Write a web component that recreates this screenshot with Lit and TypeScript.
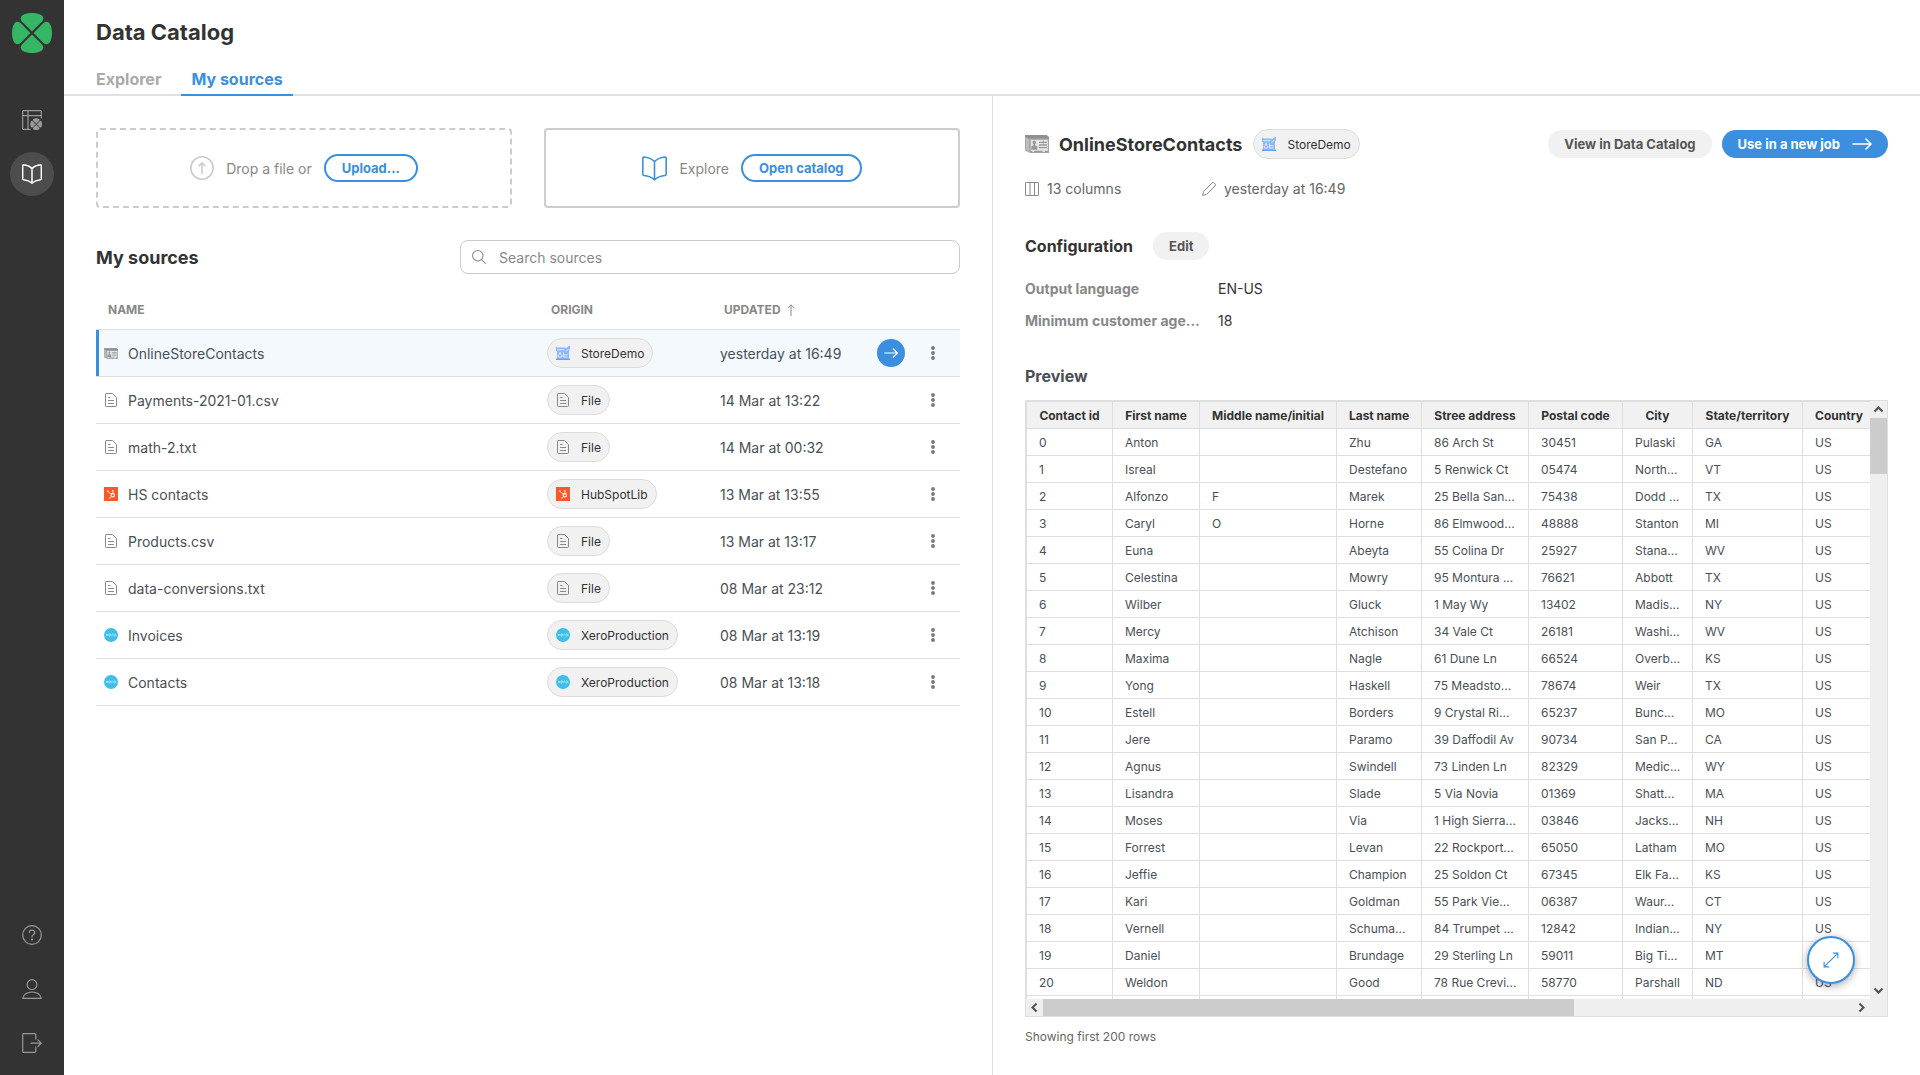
import { LitElement, html, css, svg, nothing } from "lit";
import { customElement, property, state } from "lit/decorators.js";
import { classMap } from "lit/directives/class-map.js";

type SourceKind = "contacts" | "file" | "hubspot" | "xero" | "store";

interface Source {
  name: string;
  icon: SourceKind;
  origin: string;
  originIcon: SourceKind;
  updated: string;
}

const SOURCES: Source[] = [
  { name: "OnlineStoreContacts", icon: "contacts", origin: "StoreDemo", originIcon: "store", updated: "yesterday at 16:49" },
  { name: "Payments-2021-01.csv", icon: "file", origin: "File", originIcon: "file", updated: "14 Mar at 13:22" },
  { name: "math-2.txt", icon: "file", origin: "File", originIcon: "file", updated: "14 Mar at 00:32" },
  { name: "HS contacts", icon: "hubspot", origin: "HubSpotLib", originIcon: "hubspot", updated: "13 Mar at 13:55" },
  { name: "Products.csv", icon: "file", origin: "File", originIcon: "file", updated: "13 Mar at 13:17" },
  { name: "data-conversions.txt", icon: "file", origin: "File", originIcon: "file", updated: "08 Mar at 23:12" },
  { name: "Invoices", icon: "xero", origin: "XeroProduction", originIcon: "xero", updated: "08 Mar at 13:19" },
  { name: "Contacts", icon: "xero", origin: "XeroProduction", originIcon: "xero", updated: "08 Mar at 13:18" },
];

const COLUMNS = [
  { label: "Contact id", width: 86 },
  { label: "First name", width: 87 },
  { label: "Middle name/initial", width: 137 },
  { label: "Last name", width: 85 },
  { label: "Stree address", width: 107 },
  { label: "Postal code", width: 94 },
  { label: "City", width: 70 },
  { label: "State/territory", width: 110 },
  { label: "Country", width: 73 },
];

const GRID_WIDTH = COLUMNS.reduce((sum, c) => sum + c.width, 1);

const ROWS: string[][] = [
  ["0", "Anton", "", "Zhu", "86 Arch St", "30451", "Pulaski", "GA", "US"],
  ["1", "Isreal", "", "Destefano", "5 Renwick Ct", "05474", "North...", "VT", "US"],
  ["2", "Alfonzo", "F", "Marek", "25 Bella San...", "75438", "Dodd ...", "TX", "US"],
  ["3", "Caryl", "O", "Horne", "86 Elmwood...", "48888", "Stanton", "MI", "US"],
  ["4", "Euna", "", "Abeyta", "55 Colina Dr", "25927", "Stana...", "WV", "US"],
  ["5", "Celestina", "", "Mowry", "95 Montura ...", "76621", "Abbott", "TX", "US"],
  ["6", "Wilber", "", "Gluck", "1 May Wy", "13402", "Madis...", "NY", "US"],
  ["7", "Mercy", "", "Atchison", "34 Vale Ct", "26181", "Washi...", "WV", "US"],
  ["8", "Maxima", "", "Nagle", "61 Dune Ln", "66524", "Overb...", "KS", "US"],
  ["9", "Yong", "", "Haskell", "75 Meadsto...", "78674", "Weir", "TX", "US"],
  ["10", "Estell", "", "Borders", "9 Crystal Ri...", "65237", "Bunc...", "MO", "US"],
  ["11", "Jere", "", "Paramo", "39 Daffodil Av", "90734", "San P...", "CA", "US"],
  ["12", "Agnus", "", "Swindell", "73 Linden Ln", "82329", "Medic...", "WY", "US"],
  ["13", "Lisandra", "", "Slade", "5 Via Novia", "01369", "Shatt...", "MA", "US"],
  ["14", "Moses", "", "Via", "1 High Sierra...", "03846", "Jacks...", "NH", "US"],
  ["15", "Forrest", "", "Levan", "22 Rockport...", "65050", "Latham", "MO", "US"],
  ["16", "Jeffie", "", "Champion", "25 Soldon Ct", "67345", "Elk Fa...", "KS", "US"],
  ["17", "Kari", "", "Goldman", "55 Park Vie...", "06387", "Waur...", "CT", "US"],
  ["18", "Vernell", "", "Schuma...", "84 Trumpet ...", "12842", "Indian...", "NY", "US"],
  ["19", "Daniel", "", "Brundage", "29 Sterling Ln", "59011", "Big Ti...", "MT", "US"],
  ["20", "Weldon", "", "Good", "78 Rue Crevi...", "58770", "Parshall", "ND", "US"],
  ["", "", "", "", "", "", "", "", ""],
];

const petal = "M20 18.4 9.9 8.6C7.4 5.2 9 2.6 12.4 1.3 17-.4 23-.4 27.6 1.3 31 2.6 32.6 5.2 30.1 8.6Z";
const petals = [0, 90, 180, 270].map((a) => svg`<path d=${petal} transform="rotate(${a} 20 20)" />`);

const logo = html`<svg width="40" height="40" viewBox="0 0 40 40" fill="#36b665" aria-hidden="true">${petals}</svg>`;

const jobsIcon = html`<svg width="20" height="20" viewBox="0 0 20 20" fill="none" stroke="currentColor" stroke-width="1.2" aria-hidden="true">
  <path d="M8.6 19.3H1.8A1.1 1.1 0 0 1 .7 18.2V1.8A1.1 1.1 0 0 1 1.8.7h16.4a1.1 1.1 0 0 1 1.1 1.1v6.6M.7 5.6h18.6M6 .7v18.6" />
  <g fill="currentColor" stroke="none" transform="translate(8.3 8.3) scale(.295)">${petals}</g>
</svg>`;

const bookIcon = (size: number, stroke: number) => html`<svg width=${size} height=${size} viewBox="0 0 24 24" fill="none" stroke="currentColor" stroke-width=${stroke} stroke-linejoin="round" stroke-linecap="round" aria-hidden="true">
  <path d="M12 5.4C9.6 3 6 1.3 1.8 1A1 1 0 0 0 .8 2v15.6a1.2 1.2 0 0 0 1.1 1.2c4 .4 7.4 1.7 10.1 4.2 2.7-2.5 6.1-3.8 10.1-4.2a1.2 1.2 0 0 0 1.1-1.2V2a1 1 0 0 0-1-1C18 1.3 14.4 3 12 5.4ZM12 5.4V23" />
</svg>`;

const helpIcon = html`<svg width="20" height="20" viewBox="0 0 20 20" fill="none" stroke="currentColor" stroke-width="1.2" stroke-linecap="round" aria-hidden="true">
  <circle cx="10" cy="10" r="9.3" />
  <path d="M7.3 7.6a2.7 2.5 0 1 1 4 2.2c-.9.5-1.3.9-1.3 2" />
  <circle cx="10" cy="14.6" r=".5" fill="currentColor" />
</svg>`;

const userIcon = html`<svg width="20" height="20" viewBox="0 0 20 20" fill="none" stroke="currentColor" stroke-width="1.2" stroke-linejoin="round" aria-hidden="true">
  <circle cx="10" cy="5.6" r="4.9" />
  <path d="M.8 19.3c.5-3.7 4.4-6.3 9.2-6.3s8.7 2.6 9.2 6.3Z" />
</svg>`;

const exitIcon = html`<svg width="20" height="20" viewBox="0 0 20 20" fill="none" stroke="currentColor" stroke-width="1.2" stroke-linejoin="round" stroke-linecap="round" aria-hidden="true">
  <path d="M13.8 6V1.7a1 1 0 0 0-1-1H1.7a1 1 0 0 0-1 1v16.6a1 1 0 0 0 1 1h11.100a1 1 0 0 0 1-1V14.2M9 10.2h10.2M15.9 6.9l3.3 3.3-3.3 3.3" />
</svg>`;

const uploadIcon = html`<svg width="24" height="24" viewBox="0 0 24 24" fill="none" stroke="#ccc" stroke-width="1.6" aria-hidden="true">
  <circle cx="12" cy="12" r="11.2" />
  <path d="M12 18V7M8.6 10.2 12 6.8l3.4 3.4" />
</svg>`;

const searchIcon = html`<svg width="14" height="14" viewBox="0 0 15 15" fill="none" stroke="#888" stroke-width="1.1" stroke-linecap="round" aria-hidden="true">
  <circle cx="6.2" cy="6.2" r="5.6" /><path d="m10.3 10.3 4.1 4.1" />
</svg>`;

const sortIcon = html`<svg width="8" height="12" viewBox="0 0 8 12" fill="none" stroke="currentColor" stroke-width="1" aria-hidden="true">
  <path d="M4 12V.8M.8 4 4 .8 7.2 4" />
</svg>`;

const arrowIcon = html`<svg width="20" height="12" viewBox="0 0 20 12" fill="none" stroke="#fff" stroke-width="1.6" stroke-linecap="round" stroke-linejoin="round" aria-hidden="true">
  <path d="M1 6H19M14 1 19 6 14 11" />
</svg>`;

const smallArrowIcon = html`<svg width="14" height="10" viewBox="0 0 14 10" fill="none" stroke="#fff" stroke-width="1.2" stroke-linecap="round" stroke-linejoin="round" aria-hidden="true">
  <path d="M.7 5h12.600M9.300 1l4 4-4 4" />
</svg>`;

const dotsIcon = html`<svg width="4" height="14" viewBox="0 0 4 14" fill="#777" aria-hidden="true">
  <circle cx="2" cy="2" r="1.9" /><circle cx="2" cy="7" r="1.9" /><circle cx="2" cy="12" r="1.9" />
</svg>`;

const columnsIcon = html`<svg width="14" height="14" viewBox="0 0 14 14" fill="none" stroke="#888" stroke-width="1" aria-hidden="true">
  <rect x=".5" y=".5" width="13" height="13" rx=".6" /><path d="M5 .5v13M9.500.5v13" />
</svg>`;

const pencilIcon = html`<svg width="14" height="14" viewBox="0 0 14 14" fill="none" stroke="#888" stroke-width="1" stroke-linejoin="round" aria-hidden="true">
  <path d="M.6 13.4 1.7 9.3 9.9 1.1a1.7 1.7 0 0 1 2.5 0l.5.5a1.7 1.7 0 0 1 0 2.5L4.7 12.300Z" />
</svg>`;

const expandIcon = html`<svg width="16" height="16" viewBox="0 0 16 16" fill="none" stroke="#3b8fde" stroke-width="1.1" aria-hidden="true">
  <path d="M1.300 14.700 14.700 1.300M9.800 1.100h5.100v5.100M1.100 9.800v5.100h5.100" />
</svg>`;

const chevron = (angle: number) => html`<svg width="17" height="17" viewBox="0 0 17 17" fill="none" stroke="#505050" stroke-width="2" aria-hidden="true">
  <path d="m4.500 10.500 4-4 4 4" transform="rotate(${angle} 8.500 8.500)" />
</svg>`;

const contactsIcon = (w: number, h: number) => html`<svg width=${w} height=${h} viewBox="0 0 24 18" aria-hidden="true">
  <path d="M0 0h21.500L24 2.200V18H5L0 15.500Z" fill="#a6a6a6" />
  <path d="M0 0h21.500L24 2.200V3.600H4.500L0 1.800Z" fill="#8f8f8f" />
  <path d="M1 3 4 4.300v12L1 14.800Z" fill="#bdbdbd" />
  <path d="M5.800 4.800H22.800V16.800H5.800Z" fill="#e6e6e6" />
  <path d="M9.300 5.600a1.700 1.800 0 0 1 1.700 1.800c0 .9-.4 1.500-.9 1.900v.9l2.300 1.300v3.300H6.300v-3.300l2.200-1.300v-.9c-.5-.4-.9-1-.9-1.900a1.700 1.800 0 0 1 1.700-1.800Z" fill="#999" />
  <path d="M14 7.300h8M14 10h8M14 12.700h8" stroke="#999" stroke-width="1.300" />
  <path d="M18.200 5.500v3" stroke="#999" stroke-width="1" />
  <path d="M5.500 16.500h1.500M9 16.500h8.500M20 16.500h3.500" stroke="#999" stroke-width="1.600" />
</svg>`;

const storeIcon = html`<svg width="14" height="14" viewBox="0 0 14 14" aria-hidden="true">
  <path d="M0 1.500h8.500l2 .5L13 0h1v3l-1 1v8.500h1V14H0v-1.500h1V5H0Z" fill="#8ab8fb" />
  <path d="M1 3.700h7.500M2.300 11V9.400l1-1V6.700h1.500v1.700l1 1V11ZM7.500 8.800h4M7.500 6.500v4.600h4.200M10 5.500 12.400 3" fill="none" stroke="#eef5ff" stroke-width=".8" />
  <path d="M0 .8V4M0 13.300h14" stroke="#5e9df8" stroke-width="1" />
</svg>`;

const fileIcon = html`<svg width="14" height="14" viewBox="0 0 14 14" fill="none" stroke="#888" stroke-width="1" stroke-linejoin="round" stroke-linecap="round" aria-hidden="true">
  <path d="M2.300.5h6.200L12.500 4.500v8.200a.8.8 0 0 1-.8.8H2.300a.8.8 0 0 1-.8-.8V1.300a.8.8 0 0 1 .8-.8ZM4.500 4.500h1.500M4.500 7.500h5M4.500 10.500h5" />
</svg>`;

const hubspotIcon = html`<svg width="14" height="14" viewBox="0 0 14 14" fill="none" stroke="#fff" aria-hidden="true">
  <path d="M0 0h14v14H0Z" fill="#f8582b" stroke="none" />
  <circle cx="8.800" cy="8.300" r="1.700" stroke-width="1.100" />
  <path d="M8.900 6.400V3.900M7.400 7.200 4 4.500M7.500 9.600 6 11" stroke-width=".8" />
  <circle cx="8.900" cy="3.700" r=".7" fill="#fff" stroke="none" />
  <circle cx="3.800" cy="4.100" r=".8" fill="#fff" stroke="none" />
  <circle cx="5.800" cy="11.100" r=".6" fill="#fff" stroke="none" />
</svg>`;

const xeroIcon = html`<svg width="14" height="14" viewBox="0 0 14 14" fill="none" stroke="#c3ecf9" stroke-width=".7" aria-hidden="true">
  <circle cx="7" cy="7" r="7" fill="#3fbee8" stroke="none" />
  <path d="m1.900 5.900 2 2.200m0-2.200-2 2.200M4.700 7h2.200a1.100 1.100 0 1 0-.4.900M7.900 8.200V6.700q0-.8 1-.8" />
  <circle cx="10.800" cy="7" r="1.100" />
</svg>`;

const kindIcon = (kind: SourceKind) => {
  switch (kind) {
    case "contacts": return contactsIcon(14, 11);
    case "store": return storeIcon;
    case "hubspot": return hubspotIcon;
    case "xero": return xeroIcon;
    default: return fileIcon;
  }
};

const shared = css`
  *, *::before, *::after { box-sizing: border-box; }
  h1, h2, h3, p, dl, dd { margin: 0; }
  svg { display: block; flex: none; }
  a { color: inherit; text-decoration: none; }
  button { font: inherit; color: inherit; margin: 0; padding: 0; border: 0; background: none; cursor: pointer; }
  table { border-collapse: separate; border-spacing: 0; }
`;

@customElement("origin-chip")
export class OriginChip extends LitElement {
  @property() label = "";
  @property() icon: SourceKind = "file";

  static styles = [shared, css`
    :host { display: inline-flex; }
    .chip {
      display: inline-flex; align-items: center; gap: 11px; height: 30px; padding: 0 8px;
      border: 1px solid #dcdcdc; border-radius: 15px; background: #f1f1f1;
      color: #333; font-size: 12px; white-space: nowrap;
    }
  `];

  render() {
    return html`<span class="chip">${kindIcon(this.icon)}<span>${this.label}</span></span>`;
  }
}

@customElement("side-nav")
export class SideNav extends LitElement {
  static styles = [shared, css`
    :host { display: flex; }
    .nav {
      display: flex; flex-direction: column; align-items: center; gap: 10px;
      width: 64px; padding: 13px 0 10px; background: #333; color: #999;
    }
    .logo { display: block; margin-bottom: 35px; }
    .item { display: flex; align-items: center; justify-content: center; width: 44px; height: 44px; border-radius: 50%; }
    .active { background: #4d4d4d; color: #fff; }
    .spacer { flex: 1; }
  `];

  render() {
    return html`<nav class="nav">
      <a class="logo" href="#home" aria-label="Home">${logo}</a>
      <a class="item" href="#jobs" aria-label="Jobs">${jobsIcon}</a>
      <a class="item active" href="#catalog" aria-label="Data Catalog">${bookIcon(20, 1.8)}</a>
      <span class="spacer"></span>
      <a class="item" href="#help" aria-label="Help">${helpIcon}</a>
      <a class="item" href="#account" aria-label="Account">${userIcon}</a>
      <a class="item" href="#logout" aria-label="Log out">${exitIcon}</a>
    </nav>`;
  }
}

@customElement("sources-panel")
export class SourcesPanel extends LitElement {
  @state() private selected = 0;

  static styles = [shared, css`
    :host { display: block; padding: 32px; }
    .cards { display: grid; grid-template-columns: 1fr 1fr; gap: 32px; }
    .card {
      display: flex; align-items: center; justify-content: center; gap: 12px; height: 80px;
      border: 2px solid #ccc; border-radius: 4px; color: #888; font-size: 14px;
    }
    .drop { border-style: dashed; }
    .book { color: #3b8fde; }
    .outline {
      height: 28px; padding: 0 16px; border: 2px solid #3b8fde; border-radius: 14px;
      color: #3b8fde; font-size: 13px; font-weight: 700;
    }
    .bar { display: flex; align-items: center; justify-content: space-between; margin-top: 32px; }
    .heading { font-size: 18px; line-height: 24px; padding-top: 2px; font-weight: 700; color: #333; }
    .search {
      display: flex; align-items: center; gap: 13px; width: 500px; height: 34px; padding: 0 11px;
      border: 1px solid #ccc; border-radius: 8px;
    }
    .search-input { flex: 1; min-width: 0; padding: 0; border: 0; outline: 0; background: none; font: inherit; font-size: 14px; color: #333; }
    .search-input::placeholder { color: #888; opacity: 1; }
    .sources { width: 100%; margin-top: 16px; table-layout: fixed; font-size: 14px; color: #495057; }
    .col-origin { width: 173px; }
    .col-updated { width: 157px; }
    .col-action { width: 44px; }
    .col-menu { width: 47px; }
    .th { height: 40px; padding: 0 12px; border-bottom: 1px solid #dedede; text-align: left; font-size: 12px; font-weight: 700; color: #888; }
    .sort { display: inline-flex; align-items: center; gap: 6px; font-weight: 700; }
    .td { height: 47px; padding: 0 8px; border-bottom: 1px solid #dedede; white-space: nowrap; }
    .name { display: flex; align-items: center; gap: 10px; }
    .selected .td { background: #f4f9fd; }
    .selected .td-name { box-shadow: inset 3px 0 #3b8fde; }
    .chip { display: flex; }
    .go { display: flex; align-items: center; justify-content: center; width: 28px; height: 28px; border-radius: 50%; background: #3b8fde; }
    .menu { display: flex; align-items: center; justify-content: center; width: 24px; height: 24px; }
  `];

  render() {
    return html`
      <div class="cards">
        <div class="card drop">${uploadIcon}<span>Drop a file or</span><button class="outline">Upload...</button></div>
        <div class="card"><span class="book">${bookIcon(25, 1.5)}</span><span>Explore</span><button class="outline">Open catalog</button></div>
      </div>
      <div class="bar">
        <h2 class="heading">My sources</h2>
        <label class="search">${searchIcon}<input class="search-input" type="search" placeholder="Search sources" aria-label="Search sources" /></label>
      </div>
      <table class="sources">
        <colgroup><col /><col class="col-origin" /><col class="col-updated" /><col class="col-action" /><col class="col-menu" /></colgroup>
        <thead>
          <tr>
            <th class="th">NAME</th>
            <th class="th">ORIGIN</th>
            <th class="th"><button class="sort">UPDATED ${sortIcon}</button></th>
            <th class="th"></th>
            <th class="th"></th>
          </tr>
        </thead>
        <tbody>
          ${SOURCES.map((s, i) => html`
            <tr class=${classMap({ selected: i === this.selected })} @click=${() => { this.selected = i; }}>
              <td class="td td-name"><span class="name">${kindIcon(s.icon)}<span>${s.name}</span></span></td>
              <td class="td"><origin-chip class="chip" .label=${s.origin} .icon=${s.originIcon}></origin-chip></td>
              <td class="td">${s.updated}</td>
              <td class="td">${i === this.selected ? html`<button class="go" aria-label="Use in a new job">${smallArrowIcon}</button>` : nothing}</td>
              <td class="td"><button class="menu" aria-label="More actions">${dotsIcon}</button></td>
            </tr>`)}
        </tbody>
      </table>`;
  }
}

@customElement("source-details")
export class SourceDetails extends LitElement {
  static styles = [shared, css`
    :host { display: flex; flex-direction: column; min-height: 0; padding: 32px 32px 28px; border-left: 1px solid #dedede; }
    .top { display: flex; align-items: center; height: 32px; }
    .title { margin: 0 11px 0 10px; padding-top: 1px; font-size: 18px; line-height: 24px; font-weight: 700; color: #333; }
    .actions { display: flex; gap: 10px; margin-left: auto; }
    .button {
      display: inline-flex; align-items: center; gap: 12px; height: 28px; padding: 0 16px; border-radius: 14px;
      background: #f1f1f1; color: #555; font-size: 13px; font-weight: 700; white-space: nowrap;
    }
    .primary { background: #3b8fde; color: #fff; }
    .meta { display: grid; grid-template-columns: 177px 1fr; margin-top: 19px; font-size: 14px; line-height: 20px; color: #666; }
    .meta-item { display: flex; align-items: center; gap: 8px; }
    .section { display: flex; align-items: center; gap: 20px; height: 28px; margin-top: 33px; }
    .subheading { font-size: 16px; line-height: 20px; font-weight: 700; color: #333; }
    .config { display: grid; grid-template-columns: 173px 1fr; column-gap: 20px; row-gap: 12px; margin-top: 19px; font-size: 14px; line-height: 20px; }
    .term { font-weight: 700; color: #888; white-space: nowrap; }
    .value { color: #333; }
    .preview-title { margin-top: 35px; color: #495057; }
    .frame {
      position: relative; display: grid; grid-template: minmax(0, 1fr) 17px / minmax(0, 1fr) 17px;
      flex: 1; min-height: 0; margin-top: 14px; border: 1px solid #dedede; background: #efefef;
    }
    .viewport { overflow: hidden; background: #fff; }
    .grid { table-layout: fixed; border: solid #dedede; border-width: 1px 0 0 1px; font-size: 12px; color: #495057; }
    .cell { height: 27px; padding: 0 0 0 12px; border: solid #dedede; border-width: 0 1px 1px 0; text-align: left; white-space: nowrap; }
    .head { padding: 0; background: #f1f1f1; color: #333; font-weight: 700; text-align: center; }
    .vbar { display: flex; flex-direction: column; }
    .hbar { display: flex; }
    .track { flex: 1; }
    .vthumb { height: 10%; background: #ccc; }
    .hthumb { height: 17px; width: 65.5%; background: #ccc; }
    .expand {
      position: absolute; right: 32px; bottom: 32px; display: flex; align-items: center; justify-content: center;
      width: 48px; height: 48px; border: 2px solid #3b8fde; border-radius: 50%; background: #fff; box-shadow: 0 2px 8px rgba(0, 0, 0, 0.35);
    }
    .note { margin-top: 10px; font-size: 12px; line-height: 20px; color: #666; }
  `];

  render() {
    return html`
      <div class="top">
        ${contactsIcon(24, 18)}
        <h2 class="title">OnlineStoreContacts</h2>
        <origin-chip .label=${"StoreDemo"} .icon=${"store"}></origin-chip>
        <div class="actions">
          <button class="button">View in Data Catalog</button>
          <button class="button primary">Use in a new job ${arrowIcon}</button>
        </div>
      </div>
      <div class="meta">
        <span class="meta-item">${columnsIcon}<span>13 columns</span></span>
        <span class="meta-item">${pencilIcon}<span>yesterday at 16:49</span></span>
      </div>
      <div class="section">
        <h3 class="subheading">Configuration</h3>
        <button class="button">Edit</button>
      </div>
      <dl class="config">
        <dt class="term">Output language</dt><dd class="value">EN-US</dd>
        <dt class="term">Minimum customer age…</dt><dd class="value">18</dd>
      </dl>
      <h3 class="subheading preview-title">Preview</h3>
      <div class="frame">
        <div class="viewport">
          <table class="grid" style="width:${GRID_WIDTH}px">
            <colgroup>${COLUMNS.map((c) => html`<col style="width:${c.width}px" />`)}</colgroup>
            <thead><tr>${COLUMNS.map((c) => html`<th class="cell head">${c.label}</th>`)}</tr></thead>
            <tbody>${ROWS.map((r) => html`<tr>${r.map((v) => html`<td class="cell">${v}</td>`)}</tr>`)}</tbody>
          </table>
        </div>
        <div class="vbar">${chevron(0)}<div class="track"><div class="vthumb"></div></div>${chevron(180)}</div>
        <div class="hbar">${chevron(270)}<div class="track"><div class="hthumb"></div></div>${chevron(90)}</div>
        <button class="expand" aria-label="Expand preview">${expandIcon}</button>
      </div>
      <p class="note">Showing first 200 rows</p>`;
  }
}

@customElement("app-root")
export class AppRoot extends LitElement {
  static styles = [shared, css`
    :host { display: flex; height: 100vh; overflow: hidden; background: #fff; font-family: Inter, "Liberation Sans", sans-serif; font-size: 14px; color: #333; }
    .main { display: flex; flex-direction: column; flex: 1; min-width: 0; }
    .header { padding: 18px 22px 0; border-bottom: 2px solid #dee2e6; }
    .title { padding: 0 10px; font-size: 22px; line-height: 28px; font-weight: 700; }
    .tabs { display: flex; gap: 10px; margin: 18px 0 -2px; }
    .tab { height: 32px; padding: 3px 10px 0; font-size: 16px; line-height: 24px; font-weight: 700; color: #aaa; border-bottom: 2px solid transparent; }
    .current { color: #3b8fde; border-color: #3b8fde; }
    .columns { display: grid; grid-template-columns: minmax(0, 1fr) minmax(0, 1fr); grid-template-rows: minmax(0, 1fr); flex: 1; min-height: 0; }
  `];

  render() {
    return html`
      <side-nav></side-nav>
      <main class="main">
        <header class="header">
          <h1 class="title">Data Catalog</h1>
          <nav class="tabs">
            <a class="tab" href="#explorer">Explorer</a>
            <a class="tab current" href="#sources" aria-current="page">My sources</a>
          </nav>
        </header>
        <div class="columns">
          <sources-panel></sources-panel>
          <source-details></source-details>
        </div>
      </main>`;
  }
}
